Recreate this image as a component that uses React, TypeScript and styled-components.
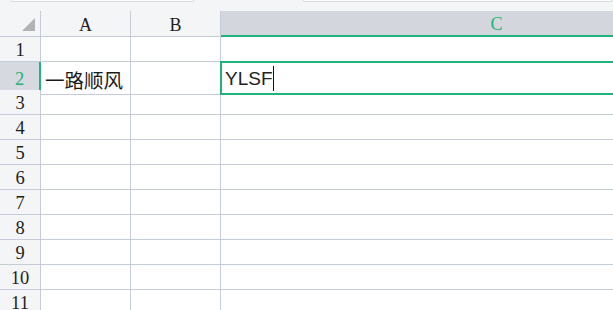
import React from "react";
import styled, { createGlobalStyle } from "styled-components";

const GlobalStyle = createGlobalStyle`
  html, body {
    margin: 0;
    padding: 0;
    background: #ffffff;
    overflow: hidden;
  }
`;

const green = "#21b47a";
const line = "#c6cbd8";

const Sheet = styled.div`
  width: 613px;
  height: 310px;
  overflow: hidden;
  background: #ffffff;
  font-family: "Liberation Serif", serif;
`;

const TopBar = styled.div`
  height: 11px;
  background: #f4f5f7;
  display: flex;
  align-items: flex-end;
  padding: 0 0 9px 10px;
  box-sizing: border-box;
  gap: 107px;
`;

const TopField = styled.div<{ $width?: number }>`
  height: 2px;
  width: ${({ $width }) => ($width ? `${$width}px` : "auto")};
  flex: ${({ $width }) => ($width ? "none" : "1")};
  background: #fcfcfd;
  border-bottom: 1px solid #d9dbe0;
  border-left: 1px solid #d9dbe0;
  border-right: 1px solid #d9dbe0;
  border-radius: 0 0 3px 3px;
`;

const Row = styled.div<{ $height: number }>`
  display: grid;
  grid-template-columns: 41px 90px 90px 552px;
  height: ${({ $height }) => $height}px;
`;

const Corner = styled.div`
  background: #f4f5f7;
  border-right: 1px solid ${line};
  border-bottom: 1px solid ${line};
  display: flex;
  align-items: flex-end;
  justify-content: flex-end;
  padding: 0 5px 5px 0;
  box-sizing: border-box;
`;

const ColHead = styled.div<{ $active?: boolean }>`
  background: ${({ $active }) => ($active ? "#d3d6dd" : "#f4f5f7")};
  border-right: 1px solid ${line};
  border-bottom: ${({ $active }) =>
    $active ? `2px solid ${green}` : `1px solid ${line}`};
  color: ${({ $active }) => ($active ? green : "#1e1e1e")};
  font-size: 18px;
  display: flex;
  align-items: center;
  justify-content: center;
  box-sizing: border-box;
  padding-top: 3px;
`;

const RowHead = styled.div<{ $active?: boolean }>`
  background: ${({ $active }) => ($active ? "#d6d9df" : "#f4f5f7")};
  border-right: ${({ $active }) =>
    $active ? `2px solid ${green}` : `1px solid ${line}`};
  border-bottom: 1px solid ${line};
  color: ${({ $active }) => ($active ? green : "#1e1e1e")};
  font-size: 18.5px;
  display: flex;
  align-items: center;
  justify-content: center;
  box-sizing: border-box;
  padding-top: 2px;
`;

const Cell = styled.div`
  border-right: 1px solid ${line};
  border-bottom: 1px solid ${line};
  box-sizing: border-box;
  display: flex;
  align-items: center;
  padding: 3px 0 0 4px;
  font-family: "Noto Sans CJK SC", sans-serif;
  font-size: 19.5px;
  color: #1a1a1a;
  white-space: nowrap;
`;

const EditCell = styled.div`
  position: relative;
  border-bottom: 1px solid ${line};
  box-sizing: border-box;
  display: flex;
  align-items: center;
  padding: 1px 0 0 4px;
  font-family: "Liberation Sans", sans-serif;
  font-size: 19px;
  color: #222;

  &::after {
    content: "";
    position: absolute;
    top: -1px;
    bottom: -1px;
    left: -1px;
    right: 0;
    border: 2px solid ${green};
    pointer-events: none;
  }
`;

const Caret = styled.span`
  display: inline-block;
  width: 1px;
  height: 25px;
  background: #111;
  margin-left: 0;
`;

const rows = [1, 2, 3, 4, 5, 6, 7, 8, 9, 10, 11];

export default function App() {
  return (
    <Sheet>
      <GlobalStyle />
      <TopBar>
        <TopField $width={183} />
        <TopField />
      </TopBar>
      <Row $height={26}>
        <Corner>
          <svg width="13" height="13" viewBox="0 0 13 13">
            <polygon points="13,0 13,13 0,13" fill="#b3b3b3" />
          </svg>
        </Corner>
        <ColHead>A</ColHead>
        <ColHead>B</ColHead>
        <ColHead $active>C</ColHead>
      </Row>
      {rows.map((n) =>
        n === 2 ? (
          <Row key={n} $height={28}>
            <RowHead $active>{n}</RowHead>
            <Cell>一路顺风</Cell>
            <Cell />
            <EditCell>
              YLSF
              <Caret />
            </EditCell>
          </Row>
        ) : (
          <Row key={n} $height={25}>
            <RowHead>{n}</RowHead>
            <Cell />
            <Cell />
            <Cell />
          </Row>
        )
      )}
    </Sheet>
  );
}
